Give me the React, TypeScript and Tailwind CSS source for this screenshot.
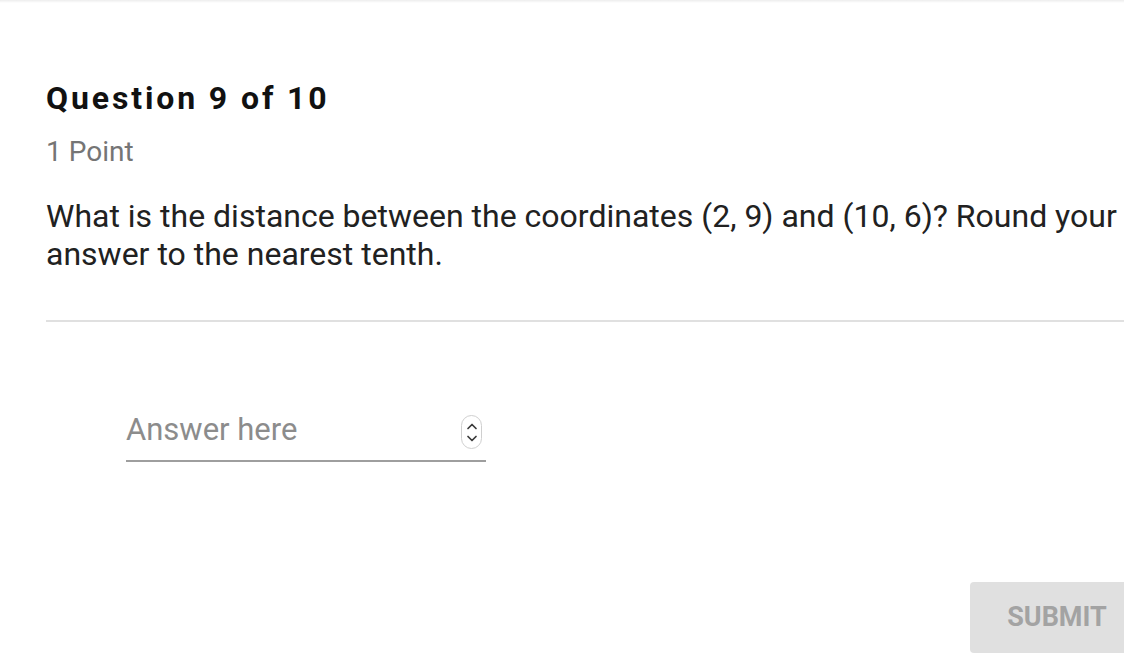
import React, { useState } from 'react';

const Spinner: React.FC = () => (
  <div className="flex h-[34px] w-[21px] flex-col items-center justify-center rounded-full border border-[#cfcfcf] bg-white">
    <svg width="12" height="9" viewBox="0 0 12 9" fill="none" stroke="#3a3a3a" strokeWidth="1.7" strokeLinecap="round" strokeLinejoin="round">
      <path d="M2 6.5 L6 2.5 L10 6.5" />
    </svg>
    <svg width="12" height="9" viewBox="0 0 12 9" fill="none" stroke="#3a3a3a" strokeWidth="1.7" strokeLinecap="round" strokeLinejoin="round" className="mt-[3px]">
      <path d="M2 2.5 L6 6.5 L10 2.5" />
    </svg>
  </div>
);

const App: React.FC = () => {
  const [answer, setAnswer] = useState('');

  return (
    <div
      className="h-[660px] w-[1124px] overflow-hidden bg-white"
      style={{ fontFamily: 'Roboto, "Liberation Sans", sans-serif' }}
    >
      <div className="h-[3px] w-full bg-gradient-to-b from-[#ededed] to-white" />
      <div className="w-[1130px] pl-[46px] pt-[77px]">
        {/* Header */}
        <h1 className="text-[32px] font-bold leading-[36px] tracking-[0.09em] text-[#111]">Question 9 of 10</h1>
        <p className="mt-[20px] text-[28px] leading-[32px] text-[#757575]">1 Point</p>

        {/* Prompt */}
        <p className="mt-[29px] text-[32px] leading-[38px] text-[#212121]">
          What is the distance between the coordinates (2, 9) and (10, 6)? Round your answer to the nearest tenth.
        </p>

        <div className="mt-[47px] h-[2px] w-full bg-[#e0e0e0]" />

        {/* Answer field */}
        <div className="ml-[80px] mt-[88px] flex w-[360px] items-center border-b-2 border-[#9e9e9e] pb-[10px]">
          <input
            type="text"
            value={answer}
            onChange={(e) => setAnswer(e.target.value)}
            placeholder="Answer here"
            className="w-full bg-transparent text-[31px] leading-[40px] text-[#212121] outline-none placeholder:text-[#8c8c8c]"
          />
          <div className="mr-[4px] mt-[4px] shrink-0">
            <Spinner />
          </div>
        </div>

        {/* Submit */}
        <div className="mt-[120px] flex justify-end">
          <button className="h-[71px] w-[160px] rounded-[4px] bg-[#e0e0e0] pl-[14px] text-[27px] font-bold text-[#a3a3a3]">
            SUBMIT
          </button>
        </div>
      </div>
    </div>
  );
};

export default App;
